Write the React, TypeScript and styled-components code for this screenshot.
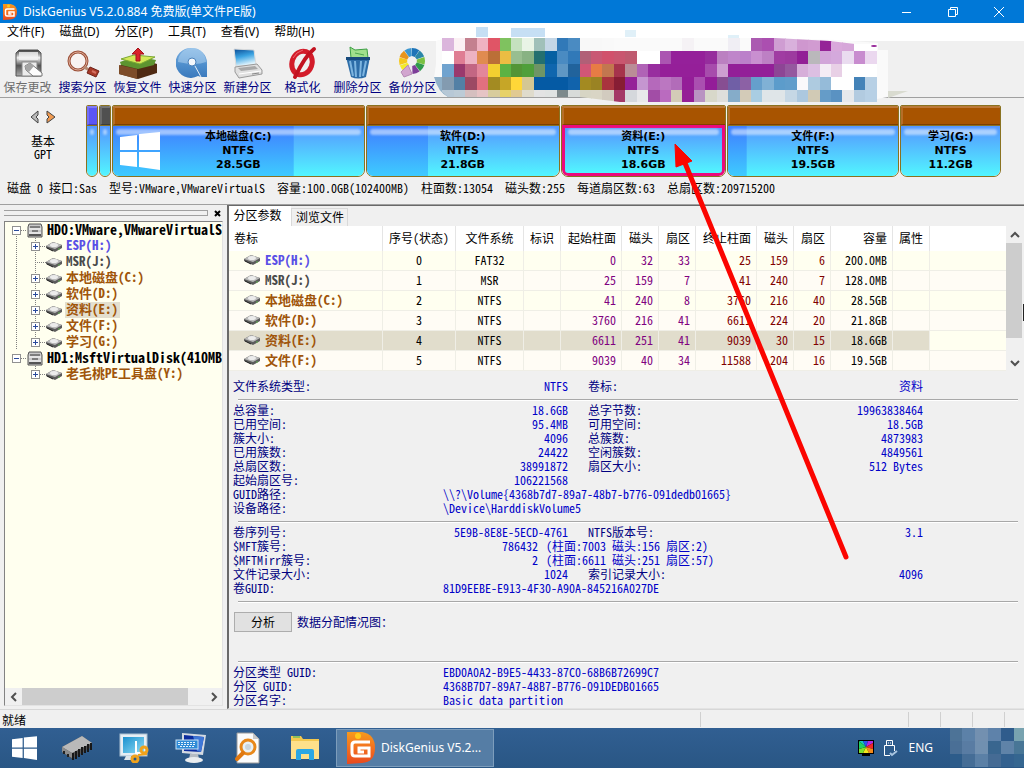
import React from "react";
import styled, { createGlobalStyle, css } from "styled-components";

const Global = createGlobalStyle`
  * { box-sizing: border-box; }
  body { margin: 0; background: #f0f0f0; }
  button { font: inherit; color: inherit; margin: 0; padding: 0; border: 0; background: none; }
  ul { list-style: none; margin: 0; padding: 0; }
  svg { flex: none; }
`;

const uiFont = css`
  font-family: "Noto Sans", "Noto Sans CJK SC", sans-serif;
  font-size: 12px;
`;

/* Half-width latin glyphs keep the two-to-one grid of the dialog text. */
const gridFont = css`
  font-family: "Noto Sans CJK SC", sans-serif;
  font-feature-settings: "hwid";
  font-size: 12px;
  line-height: 14px;
`;

const Page = styled.div`
  ${gridFont}
  position: relative;
  display: flex;
  flex-direction: column;
  min-height: 100vh;
  overflow: hidden;
  color: #000;
`;

const TitleBar = styled.header`
  ${uiFont}
  font-feature-settings: normal;
  display: flex;
  align-items: center;
  height: 23px;
  padding: 0 2px;
  background: #0078d7;
  color: #fff;
`;
const Title = styled.h1`
  flex: 1;
  margin: 0 0 0 5px;
  font-size: 12px;
  font-weight: 400;
  line-height: 20px;
`;
const WindowButton = styled.button`
  width: 46px;
  height: 22px;
  display: grid;
  place-items: center;
`;

const MenuBar = styled.nav`
  ${uiFont}
  font-feature-settings: normal;
  display: flex;
  gap: 15px;
  height: 18px;
  padding-left: 7px;
  background: #fff;
  line-height: 18px;
`;

const Toolbar = styled.div`
  display: flex;
  height: 57px;
  border-bottom: 1px solid #a0a0a0;
`;
const Tool = styled.button<{ $disabled?: boolean }>`
  display: flex;
  flex-direction: column;
  align-items: center;
  width: 55px;
  padding-top: 5px;
  color: ${(p) => (p.$disabled ? "#6d6d6d" : "#000080")};
  white-space: nowrap;
`;

const DiskBar = styled.section`
  display: flex;
  padding: 7px 23px 0 0;
`;
const DiskNav = styled.div`
  width: 86px;
  display: flex;
  flex-direction: column;
  align-items: center;
  text-align: center;
  padding-top: 5px;
  gap: 9px;
  line-height: 13px;
`;
const NavArrows = styled.div`
  display: flex;
  gap: 6px;
`;
const Partitions = styled.div`
  flex: 1;
  display: flex;
  gap: 1px;
  height: 72px;
`;
const Partition = styled.button<{ $grow?: number; $head: string }>`
  flex: ${(p) => (p.$grow ? `${p.$grow} 1 0` : "0 0 12px")};
  min-width: 0;
  display: flex;
  flex-direction: column;
  border: 1px solid #8a7220;
  border-radius: 2px 2px 7px 7px;
  overflow: hidden;
  &::before {
    content: "";
    width: 100%;
    height: 16px;
    flex: none;
    background: ${(p) => p.$head};
    border: 2px solid;
    border-color: #ffffff38 #00000030 #00000040 #ffffff28;
    border-bottom-width: 1px;
  }
`;
const PartitionBody = styled.span<{ $used: number; $active?: boolean }>`
  position: relative;
  flex: 1;
  width: 100%;
  border: ${(p) => (p.$active ? "3px solid #ec0a7c" : "0")};
  border-top: ${(p) => (p.$active ? "3px solid #ec0a7c" : "1px solid #8a7220")};
  border-radius: 0 0 6px 6px;
  background:
    linear-gradient(#407eff, #3ecbff) 0 0 / ${(p) => p.$used}% 100% no-repeat,
    linear-gradient(#5596ff, #52f6ff);
  display: flex;
  align-items: flex-start;
  justify-content: center;
  padding-top: ${(p) => (p.$active ? "2px" : "4px")};
  &::before {
    content: "";
    position: absolute;
    left: 3px;
    right: 3px;
    top: ${(p) => (p.$active ? "1px" : "3px")};
    height: 6px;
    border-radius: 4px;
    background: #ffffff80;
    filter: blur(1px);
  }
`;
const PartitionText = styled.span`
  position: relative;
  font-family: "DejaVu Sans", "Noto Sans CJK SC", sans-serif;
  font-feature-settings: normal;
  font-size: 11px;
  font-weight: 700;
  line-height: 14px;
  text-align: center;
  & > span { display: block; height: 14px; }
`;
const SystemLogo = styled.svg`
  position: absolute;
  left: 7px;
  top: 6px;
`;
const DiskInfo = styled.p`
  margin: 0;
  padding: 4px 7px 9px;
  white-space: pre;
`;

const Main = styled.main`
  flex: 1;
  display: flex;
  border-top: 1px solid #a0a0a0;
`;
const Side = styled.aside`
  width: 227px;
  display: flex;
  flex-direction: column;
  padding: 0 4px 3px;
`;
const Grip = styled.div`
  height: 16px;
  display: flex;
  align-items: center;
  gap: 4px;
`;
const GripBar = styled.span`
  flex: 1;
  height: 6px;
  border: solid #a0a0a0;
  border-width: 1px 0;
  border-right: 1px solid #a0a0a0;
`;
const CloseButton = styled.button`
  width: 11px;
  height: 13px;
  display: grid;
  place-items: center;
`;
const TreeBox = styled.div`
  flex: 1;
  display: flex;
  flex-direction: column;
  background: #ffffef;
  border: 1px solid #828282;
  border-right-color: #e3e3e3;
  border-bottom-color: #e3e3e3;
  overflow: hidden;
`;
const dots = "repeating-linear-gradient(#808080 0 1px, transparent 1px 2px)";
const Tree = styled.ul`
  flex: 1;
  overflow: hidden;
  & > li > ul { background: ${dots} 30px 0 / 1px calc(100% - 8px) no-repeat; }
  & > li:first-child { background: ${dots} 11px 8px / 1px 100% no-repeat; }
`;
const TreeRow = styled.div<{ $child?: boolean }>`
  display: flex;
  align-items: center;
  height: 16px;
  padding-left: ${(p) => (p.$child ? "26px" : "7px")};
`;
const Expander = styled.button`
  flex: none;
  width: 9px;
  height: 9px;
  border: 1px solid #919191;
  background: #fff;
  display: grid;
  place-items: center;
`;
const Dash = styled.span<{ $wide?: boolean }>`
  flex: none;
  width: ${(p) => (p.$wide ? "11px" : "6px")};
  margin-left: ${(p) => (p.$wide ? "4px" : "0")};
  height: 1px;
  background: repeating-linear-gradient(90deg, #808080 0 1px, transparent 1px 2px);
`;
const TreeLabel = styled.span<{ $color: string; $disk?: boolean; $active?: boolean }>`
  color: ${(p) => p.$color};
  font-size: ${(p) => (p.$disk ? "14px" : "13px")};
  font-weight: 700;
  line-height: 14px;
  white-space: nowrap;
  margin-left: 3px;
  padding: 0 2px 2px 1px;
  background: ${(p) => (p.$active ? "#e3dfcf" : "transparent")};
`;
const HScroll = styled.div`
  height: 17px;
  display: flex;
  background: #f0f0f0;
`;
const VScroll = styled.div`
  width: 16px;
  display: flex;
  flex-direction: column;
  background: #f0f0f0;
`;
const ScrollButton = styled.button`
  flex: none;
  width: 17px;
  height: 17px;
  display: grid;
  place-items: center;
`;
const Thumb = styled.span<{ $share: number }>`
  flex: ${(p) => p.$share};
  background: #cdcdcd;
`;
const Track = styled.span<{ $share: number }>`
  flex: ${(p) => p.$share};
`;

const Content = styled.section`
  flex: 1;
  min-width: 0;
  border: solid #696969;
  border-width: 1px 0 0 2px;
  border-bottom: 1px solid #e3e3e3;
`;
const Tabs = styled.div`
  display: flex;
  align-items: flex-end;
  height: 20px;
`;
const Tab = styled.button<{ $active?: boolean }>`
  height: ${(p) => (p.$active ? "20px" : "18px")};
  padding: 0 ${(p) => (p.$active ? "9px 3px 4px" : "4px 1px")};
  width: ${(p) => (p.$active ? "62px" : "57px")};
  background: ${(p) => (p.$active ? "#fff" : "#f0f0f0")};
  border: ${(p) => (p.$active ? "0" : "1px solid #d9d9d9")};
  border-bottom: 0;
  white-space: nowrap;
`;
const GridArea = styled.div`
  display: flex;
  margin-right: 2px;
  background: #fff;
`;
const Grid = styled.table`
  flex: 1;
  border-collapse: separate;
  border-spacing: 0;
  table-layout: fixed;
  min-width: 0;
`;
const HeadCell = styled.th<{ $align?: string }>`
  height: 25px;
  padding: 0 5px 2px;
  border-right: 1px solid #e5e5e5;
  font-weight: 400;
  text-align: ${(p) => p.$align || "center"};
  white-space: nowrap;
`;
const BodyRow = styled.tr<{ $active?: boolean }>`
  background: #fffcf5;
  &:nth-child(odd) { background: #fffff0; }
  ${(p) => p.$active && css`
    && td:not(:last-child) { background: #e1ddcc; }
  `}
`;
const Cell = styled.td<{ $align?: string; $color?: string }>`
  height: 20px;
  padding: 0 5px 2px;
  border: solid #efeee6;
  border-width: 0 1px 1px 0;
  color: ${(p) => p.$color || "#000"};
  text-align: ${(p) => p.$align || "center"};
  white-space: nowrap;
  &:last-child { border-right: 0; }
`;
const VolumeName = styled.span`
  display: flex;
  align-items: center;
  gap: 5px;
  padding-left: 10px;
  font-size: 13px;
  font-weight: 700;
`;

const Details = styled.div`
  padding-top: 8px;
  color: #000080;
`;
const Group = styled.dl`
  margin: 0 6px 0 4px;
`;
const Line = styled.div`
  display: grid;
  grid-template-columns: 210px 125px 20px 120px 215px;
  height: 14px;
  white-space: pre;
  & > dt { grid-row: 1; }
`;
const SecondLabel = styled.dt`
  grid-column: 4;
`;
const Value = styled.dd<{ $mode: "first" | "second" | "wide" | "lead" | "tail" }>`
  margin: 0;
  color: #0000c8;
  grid-row: 1;
  ${(p) => p.$mode === "first" && css`grid-column: 2; text-align: right;`}
  ${(p) => p.$mode === "second" && css`grid-column: 5; text-align: right;`}
  ${(p) => p.$mode === "wide" && css`grid-column: 2 / 6;`}
  ${(p) => p.$mode === "lead" && css`grid-column: 2; text-align: right; padding-right: 30px;`}
  ${(p) => p.$mode === "tail" && css`grid-column: 2 / 6; padding-left: 103px;`}
`;
const Rule = styled.hr`
  margin: 6px 6px 2px 9px;
  border: 0;
  height: 2px;
  background: linear-gradient(#a8a8a8 50%, #fff 50%);
`;
const Analysis = styled.div`
  display: flex;
  align-items: center;
  gap: 5px;
  padding: 7px 0 23px 5px;
`;
const AnalyzeButton = styled.button`
  width: 58px;
  height: 20px;
  border: 1px solid #adadad;
  background: #e1e1e1;
  color: #000;
`;

const StatusBar = styled.footer`
  display: flex;
  height: 19px;
  border-top: 1px solid #d7d7d7;
`;
const StatusPane = styled.span<{ $width?: number }>`
  flex: ${(p) => (p.$width ? `0 0 ${p.$width}px` : "1")};
  margin-top: 2px;
  margin-bottom: 1px;
  padding-left: 2px;
  line-height: 16px;
  border-right: 1px solid #d0d0d0;
  &:last-child { border-right: 0; }
`;

const Taskbar = styled.nav`
  ${uiFont}
  font-feature-settings: normal;
  display: flex;
  height: 40px;
  background: linear-gradient(#315f92, #295684);
  color: #fff;
`;
const TaskButton = styled.button`
  width: 57px;
  display: grid;
  place-items: center;
  &:first-child { width: 48px; }
`;
const TaskWindow = styled.button`
  width: 158px;
  margin: 1px 0 1px 3px;
  padding-left: 8px;
  display: flex;
  align-items: center;
  gap: 4px;
  border: 1px solid #7d9dbc;
  background: #557da5;
  white-space: nowrap;
`;
const Tray = styled.div`
  margin-left: auto;
  display: flex;
  align-items: center;
  gap: 10px;
`;
const Language = styled.button`
  margin-right: 7px;
`;

const Overlay = styled.svg`
  position: absolute;
  pointer-events: none;
`;
const PromoMosaic = styled(Overlay)`
  left: 433px;
  top: 26px;
`;
const Pointer = styled(Overlay)`
  left: 668px;
  top: 140px;
`;

/* ---------- icons ---------- */

const GeniusLogo = ({ size }: { size: number }) => (
  <svg width={size} height={size} viewBox="0 0 30 32">
    <defs>
      <linearGradient id={`dg${size}`} x2="0" y2="1">
        <stop offset="0" stopColor="#f79a1c" />
        <stop offset="0.5" stopColor="#f2701f" />
        <stop offset="1" stopColor="#e8491f" />
      </linearGradient>
    </defs>
    <path d="M1 0H16Q29 2 29 16T16 31L1 32Z" fill={`url(#dg${size})`} />
    <circle cx="12" cy="4" r="3" fill="#ffc91c" />
    <path d="M24 10H9Q6 10 6 13V21Q6 24 9 24H23V16H13V20H18" fill="none" stroke="#fff" strokeWidth="3" />
  </svg>
);

const WinShape = () => (
  <path d="M0 5 17 3V18H0ZM19 2 40 0V18H19ZM0 20H17V35L0 33ZM19 20H40V38L19 35Z" fill="#fff" />
);
const WinLogo = () => (
  <svg width="25" height="24" viewBox="0 0 40 38"><WinShape /></svg>
);

const SaveIcon = () => (
  <svg width="34" height="34" viewBox="0 0 34 34">
    <defs><linearGradient id="sv" x2="0" y2="1"><stop offset="0" stopColor="#333" /><stop offset=".3" stopColor="#f4f4f4" /><stop offset=".6" stopColor="#555" /><stop offset="1" stopColor="#aaa" /></linearGradient></defs>
    <path d="M8 4H27L30 7V30H5V7Z" fill="url(#sv)" stroke="#555" />
    <path d="M8 6H27V14H8Z" fill="#f3f3f3" opacity=".8" />
    <rect x="11" y="16" width="15" height="14" fill="#ececec" stroke="#888" />
    <path d="M14 20 19 17 31 27V30H22L15 24Z" fill="#fdfdfd" stroke="#777" />
    <path d="M14 20 19 17 23 20 18 26 15 24Z" fill="#a5a5a5" />
  </svg>
);
const SearchIcon = () => (
  <svg width="34" height="34" viewBox="0 0 34 34">
    <circle cx="12" cy="15" r="9" fill="#f8f3f1" stroke="#9c5038" strokeWidth="3" />
    <circle cx="12" cy="15" r="9" fill="none" stroke="#dfb09c" strokeWidth="1" />
    <path d="M18 21 25 25" stroke="#b58a72" strokeWidth="3" />
    <path d="M24 21 33 25 30 31 21 27Z" fill="#a83a28" stroke="#6e2117" />
    <path d="M26 25 30 27" stroke="#d57060" strokeWidth="2" />
  </svg>
);
const RestoreIcon = () => (
  <svg width="40" height="34" viewBox="0 0 40 34">
    <path d="M1 20 20 12 39 18V27L20 33 1 28Z" fill="#4f2a12" />
    <path d="M1 19 19 23V33L1 28Z" fill="#7d4c28" />
    <path d="M2 16 18 10 38 14 36 19 20 23 3 19Z" fill="#5d9430" />
    <path d="M3 13 16 9 37 11 22 18Z" fill="#d3e858" stroke="#7ba832" />
    <path d="M18 15V8H14L20 2 26 8H22V15Z" fill="#d9222a" stroke="#a3131a" />
  </svg>
);
const QuickIcon = () => (
  <svg width="34" height="34" viewBox="0 0 34 34">
    <defs><linearGradient id="qk" x2="0" y2="1"><stop offset="0" stopColor="#7db1e2" /><stop offset=".55" stopColor="#4f8fcd" /><stop offset="1" stopColor="#3a79bc" /></linearGradient></defs>
    <path d="M16 2A15 15 0 0 1 31 17V31H25L22 30A15 15 0 1 1 16 2Z" fill="url(#qk)" />
    <path d="M2 16A14 14 0 0 1 30 16Q20 20 2 16Z" fill="#b9daf3" opacity=".5" />
    <circle cx="16" cy="16" r="4" fill="#f4f8fc" stroke="#4a82bb" />
    <path d="M19 20 25 31" stroke="#e6eff8" strokeWidth="1" />
  </svg>
);
const NewIcon = () => (
  <svg width="34" height="34" viewBox="0 0 34 34">
    <defs><linearGradient id="nw" x2=".3" y2="1"><stop offset="0" stopColor="#0b4a92" /><stop offset=".5" stopColor="#3aa3e2" /><stop offset="1" stopColor="#dff3fc" /></linearGradient></defs>
    <path d="M3 3 23 4 25 19 5 20Z" fill="url(#nw)" stroke="#dcdcdc" />
    <path d="M4 21 26 18 31 24V28L8 32 4 26Z" fill="#e0e0e0" stroke="#999" />
    <path d="M7 22 24 20 27 23 10 25Z" fill="#a8a8a8" />
    <path d="M8 28 30 25" stroke="#fff" />
    <path d="M21 28 28 27" stroke="#888" />
  </svg>
);
const FormatIcon = () => (
  <svg width="34" height="34" viewBox="0 0 34 34">
    <ellipse cx="16" cy="17" rx="10" ry="12" transform="rotate(20 16 17)" fill="none" stroke="#d31c2a" strokeWidth="5" />
    <path d="M28 3Q19 10 9 31" fill="none" stroke="#c21220" strokeWidth="4" strokeLinecap="round" />
    <path d="M7 12Q10 6 17 4" fill="none" stroke="#ee6670" strokeWidth="1" />
  </svg>
);
const DeleteIcon = () => (
  <svg width="34" height="34" viewBox="0 0 34 34">
    <path d="M9 1 14 4 26 3 27 12H10Z" fill="#a0e08c" stroke="#3d9f45" />
    <path d="M14 7 23 9" stroke="#4ca850" />
    <path d="M5 11H29L25 31Q17 34 10 31Z" fill="#2d6da8" />
    <path d="M5 11H29V14H5Z" fill="#174a7c" />
    <path d="M9 15 12 30M14 15 15 31M20 15 19 31M25 15 22 30" stroke="#7db5e0" strokeWidth="2" />
  </svg>
);
const wheel = ["#1d74b8", "#2a86a8", "#7ac142", "#2f9a4c", "#7d3d98", "#efe6f0", "#f4ea2c", "#f5c81c", "#e8951c", "#3e97cf"];
const wheelPoint = (r: number, t: number) => `${(16 + r * Math.cos(t)).toFixed(1)} ${(15 + r * Math.sin(t)).toFixed(1)}`;
const BackupIcon = () => (
  <svg width="34" height="34" viewBox="0 0 34 34">
    {wheel.map((c, i) => {
      const a = ((i * 36 - 90) * Math.PI) / 180;
      const b = ((i * 36 - 56) * Math.PI) / 180;
      return <path key={c} d={`M${wheelPoint(5, a)}L${wheelPoint(13, a)}A13 13 0 0 1 ${wheelPoint(13, b)}L${wheelPoint(5, b)}Z`} fill={c} />;
    })}
    <path d="M12 19 16 28 8 31 5 26Z" fill="#d2a5cf" stroke="#b58ab5" />
  </svg>
);

const DriveIcon = () => (
  <svg width="16" height="11" viewBox="0 0 16 11">
    <path d="M0 5 7 1 16 4V7L9 11 0 7Z" fill="#5c5c5c" />
    <path d="M0 5 7 1 16 4 9 8Z" fill="#b9b9b9" />
    <ellipse cx="8" cy="4" rx="4" ry="2" fill="#ececec" />
    <path d="M1 7 7 10" stroke="#222" />
    <path d="M12 8H14" stroke="#5fae4d" />
  </svg>
);
const HardDiskIcon = () => (
  <svg width="16" height="15" viewBox="0 0 16 15">
    <path d="M2 1H14L15 4V14H1V4Z" fill="#c9c9c9" stroke="#555" />
    <path d="M2 6H14M2 10H14" stroke="#fff" />
    <path d="M3 4H13M5 8H11" stroke="#333" />
    <path d="M2 12H14" stroke="#555" strokeWidth="2" />
  </svg>
);
const Chevron = ({ d }: { d: string }) => (
  <svg width="10" height="10" viewBox="0 0 10 10"><path d={d} fill="none" stroke="#505050" strokeWidth="2" /></svg>
);
const NavArrow = ({ d, fill }: { d: string; fill: string }) => (
  <svg width="10" height="14" viewBox="0 0 10 14"><path d={d} fill={fill} stroke="#444" /></svg>
);

const ChipIcon = () => (
  <svg width="32" height="26" viewBox="0 0 32 26">
    <path d="M1 12 21 1 31 8V12L11 24 1 17Z" fill="#555" />
    <path d="M1 12 21 1 31 8 11 18Z" fill="#b9b9b9" />
    <path d="M1 12 11 18V23L1 17Z" fill="#8c8c8c" />
    <path d="M12 18V25M15 16V24M18 14V22M21 12V20M24 11V18M27 9V17M30 8V15" stroke="#181818" strokeWidth="2" />
    <path d="M3 16V19M7 19V22" stroke="#222" strokeWidth="2" />
  </svg>
);
const SnipIcon = () => (
  <svg width="30" height="30" viewBox="0 0 30 30">
    <defs><linearGradient id="sn" x2="1" y2="1"><stop offset="0" stopColor="#1a90cf" /><stop offset="1" stopColor="#8fdcf4" /></linearGradient></defs>
    <rect x="1" y="1" width="27" height="22" fill="#e6eef5" stroke="#a9c0d2" />
    <rect x="4" y="4" width="21" height="16" fill="url(#sn)" />
    <path d="M7 23H12V27H5Z" fill="#dfe6ec" />
    <path d="M17 8V21M16 20H25" fill="none" stroke="#fff" strokeWidth="2" />
    <ellipse cx="16" cy="26" rx="3" ry="3" fill="none" stroke="#f0a21c" strokeWidth="3" />
    <ellipse cx="25" cy="17" rx="3" ry="3" fill="none" stroke="#f0a21c" strokeWidth="3" />
    <path d="M19 22 28 21" stroke="#f0a21c" strokeWidth="2" />
  </svg>
);
const KeyboardIcon = () => (
  <svg width="32" height="32" viewBox="0 0 32 32">
    <path d="M7 1 31 3 28 23 7 21Z" fill="#d4dae2" />
    <path d="M9 3 29 5 26 20 9 19Z" fill="#0c2c9e" />
    <path d="M18 4 29 5 26 20 22 19Z" fill="#3f78d8" />
    <path d="M15 22H23L24 27H14Z" fill="#b5bcc4" />
    <ellipse cx="19" cy="28" rx="9" ry="3" fill="#e9ecef" />
    <rect x="1" y="8" width="22" height="9" fill="#2f8bd6" stroke="#c8e2f6" />
    <path d="M3 10.500H21M3 12.500H21M5 14.500H19" stroke="#e5f3fc" strokeDasharray="2 1" />
  </svg>
);
const DocSearchIcon = () => (
  <svg width="28" height="32" viewBox="0 0 28 32">
    <path d="M3 1H19L25 7V31H3Z" fill="#fbfbfb" stroke="#999" />
    <path d="M19 1V7H25Z" fill="#c8c8c8" />
    <circle cx="14" cy="15" r="7" fill="#e8f0f5" stroke="#e8881a" strokeWidth="3" />
    <circle cx="14" cy="15" r="3" fill="#c9d5de" />
    <path d="M9 21 3 27" stroke="#e07810" strokeWidth="4" strokeLinecap="round" />
  </svg>
);
const FolderIcon = () => (
  <svg width="28" height="26" viewBox="0 0 28 26">
    <path d="M0 1H10L12 4H28V24H0Z" fill="#f3c84e" />
    <path d="M2 2H9" stroke="#8fbf5a" strokeWidth="2" />
    <path d="M0 6H28V24H0Z" fill="#fde08a" />
    <path d="M5 25V16Q5 14 7 14H21Q23 14 23 16V25H18V19H10V25Z" fill="#2aa7e4" />
  </svg>
);
const ColorIcon = () => (
  <svg width="16" height="16" viewBox="0 0 16 16">
    <path d="M0 0H16V14H12V16H4V14H0Z" fill="#000" />
    <path d="M8 7 1 1H5Z" fill="#19c8c0" /><path d="M8 7 5 1H10Z" fill="#2a55f0" />
    <path d="M8 7 10 1H15V3Z" fill="#b02ae0" /><path d="M8 7 15 3V9Z" fill="#f02828" />
    <path d="M8 7 15 9V13H11Z" fill="#f58a1a" /><path d="M8 7 11 13H5Z" fill="#f4e41c" />
    <path d="M8 7 5 13H1V9Z" fill="#7ee02c" /><path d="M8 7 1 9V1Z" fill="#1fd060" />
  </svg>
);
const UsbIcon = () => (
  <svg width="14" height="17" viewBox="0 0 14 17" fill="none" stroke="#fff">
    <path d="M2.500 5V.5H8.500V5M.5 5.500H10.500V11M6 15.500H.5V5.500" />
    <path d="M4 3H5M6 3H7" />
    <path d="M6 13 8 15 13 11" stroke="#a8c4e0" strokeWidth="2" />
  </svg>
);

/* ---------- data ---------- */

const tools: [string, React.ReactNode, boolean?][] = [
  ["保存更改", <SaveIcon />, true],
  ["搜索分区", <SearchIcon />],
  ["恢复文件", <RestoreIcon />],
  ["快速分区", <QuickIcon />],
  ["新建分区", <NewIcon />],
  ["格式化", <FormatIcon />],
  ["删除分区", <DeleteIcon />],
  ["备份分区", <BackupIcon />],
];

const BROWN = "#a85400";
const parts = [
  { name: "本地磁盘(C:)", size: "28.5GB", grow: 254, used: 72, logo: true },
  { name: "软件(D:)", size: "21.8GB", grow: 195, used: 32 },
  { name: "资料(E:)", size: "18.6GB", grow: 165, used: 0, active: true },
  { name: "文件(F:)", size: "19.5GB", grow: 173, used: 11 },
  { name: "学习(G:)", size: "11.2GB", grow: 100, used: 0 },
];

const VIOLET = "#5a50e6";
const GREY = "#4a4a4a";
const ORANGE = "#a0550a";
const tree = [
  {
    name: "HD0:VMware,VMwareVirtualS",
    items: [
      ["ESP(H:)", VIOLET], ["MSR(J:)", GREY], ["本地磁盘(C:)", ORANGE], ["软件(D:)", ORANGE],
      ["资料(E:)", ORANGE], ["文件(F:)", ORANGE], ["学习(G:)", ORANGE],
    ],
  },
  { name: "HD1:MsftVirtualDisk(410MB", items: [["老毛桃PE工具盘(Y:)", ORANGE]] },
];

const columns: [string, number, string?][] = [
  ["卷标", 154, "left"], ["序号(状态)", 73], ["文件系统", 68], ["标识", 37], ["起始柱面", 61, "right"],
  ["磁头", 37, "right"], ["扇区", 37, "right"], ["终止柱面", 61, "right"], ["磁头", 37, "right"],
  ["扇区", 37, "right"], ["容量", 62, "right"], ["属性", 37],
];
const rows: [string, string, string[]][] = [
  ["ESP(H:)", VIOLET, ["0", "FAT32", "", "0", "32", "33", "25", "159", "6", "200.0MB", ""]],
  ["MSR(J:)", GREY, ["1", "MSR", "", "25", "159", "7", "41", "240", "7", "128.0MB", ""]],
  ["本地磁盘(C:)", ORANGE, ["2", "NTFS", "", "41", "240", "8", "3760", "216", "40", "28.5GB", ""]],
  ["软件(D:)", ORANGE, ["3", "NTFS", "", "3760", "216", "41", "6611", "224", "20", "21.8GB", ""]],
  ["资料(E:)", ORANGE, ["4", "NTFS", "", "6611", "251", "41", "9039", "30", "15", "18.6GB", ""]],
  ["文件(F:)", ORANGE, ["5", "NTFS", "", "9039", "40", "34", "11588", "204", "16", "19.5GB", ""]],
];
const cellColor = (i: number) => (i >= 3 && i <= 5 ? "#800080" : i >= 6 && i <= 8 ? "#800000" : "#000");

type Field = { a: string; v?: string; b?: string; w?: string; wide?: string; lead?: string; tail?: string };
const head: Field[] = [{ a: "文件系统类型:", v: "NTFS", b: "卷标:", w: "资料" }];
const capacity: Field[] = [
  { a: "总容量:", v: "18.6GB", b: "总字节数:", w: "19963838464" },
  { a: "已用空间:", v: "95.4MB", b: "可用空间:", w: "18.5GB" },
  { a: "簇大小:", v: "4096", b: "总簇数:", w: "4873983" },
  { a: "已用簇数:", v: "24422", b: "空闲簇数:", w: "4849561" },
  { a: "总扇区数:", v: "38991872", b: "扇区大小:", w: "512 Bytes" },
  { a: "起始扇区号:", v: "106221568" },
  { a: "GUID路径:", wide: "\\\\?\\Volume{4368b7d7-89a7-48b7-b776-091dedb01665}" },
  { a: "设备路径:", wide: "\\Device\\HarddiskVolume5" },
];
const volume: Field[] = [
  { a: "卷序列号:", v: "5E9B-8E8E-5ECD-4761", b: "NTFS版本号:", w: "3.1" },
  { a: "$MFT簇号:", lead: "786432", tail: "(柱面:7003 磁头:156 扇区:2)" },
  { a: "$MFTMirr簇号:", lead: "2", tail: "(柱面:6611 磁头:251 扇区:57)" },
  { a: "文件记录大小:", v: "1024", b: "索引记录大小:", w: "4096" },
  { a: "卷GUID:", wide: "81D9EEBE-E913-4F30-A90A-845216A027DE" },
];
const guid: Field[] = [
  { a: "分区类型 GUID:", wide: "EBD0A0A2-B9E5-4433-87C0-68B6B72699C7" },
  { a: "分区 GUID:", wide: "4368B7D7-89A7-48B7-B776-091DEDB01665" },
  { a: "分区名字:", wide: "Basic data partition" },
];

const mosaic = [
  "dbb5dc fbf0f3 c4808f efb2c2 e05566 7fc25f c5e1bf e9f4e6 a0c0b9 c4d6e6 3179b8 4a8bc2 f8f8f8 f8f8f8 f9f9f9 fafafa fafafa fafafa fafafa fafafa fafafa f5f2f5 fafafa fafafa fafafa f0eef4 fafafa ab5bb1 ab4fb0 cf9dd2 d9b0dc cf97cf d19bd1 952497 d9a8db d6a6d9 ffffff ffffff",
  "ffffff df7d93 edb2c2 e08b50 bb6f37 ebbd43 98be90 88b283 24706f 0660a2 4a8bc2 3179b8 b16077 c95874 d1516c c9566f bf5a6f ffffff ffffff ab55b1 95209a 95209a 95209a 962d9d bb80c1 bf85ca bb80ca c98fd0 bd80c4 a03ca2 9d3a9f 921f96 bab8bb d2a5d9 d4a9dc eadcf0 c88ccf ebd8ef",
  "70a3cf 9a396d c36683 e3869a f3cf30 5bb243 539536 4f9f3b 6f9566 0f66ae 5f97c4 21639c d15676 e77c45 c2774f a6334c ba8d97 b063b6 982e9f 951f99 951f99 951f99 951f99 a74cac cd9fd1 931f98 931f98 931f98 931f98 8d4595 95589f d6aed9 dcbfe2 f4ecf5 e8d0e6 ffffff ffffff ffffff",
  "839bb0 5380a5 9c4964 e27080 a38b22 c6a627 ffd738 d4c793 055aa4 055aa4 055aa4 1163ac a38a21 9a8323 a9333e 871d34 952198 c596d0 b569bb bb77c1 b26cb9 941d98 aa4fb0 931d98 874e92 705fa6 8c61a5 659fcc 80b1d5 5c9ccb 609dcb f9f9fb aecbe0 95bbd9 ffffff ffffff 4483b8 b7d0e5",
  "b7c8d6 bccbd6 d5bfbf e6c4c5 d8cc9d e7d268 e1ca92 dfdbcc e3e3e3 e0e3e2 7d898b d8dbd9 d7d5c4 d9d5c5 d2cbbf a43866 d5d8dc e8e8ea a24da6 ba6bbf d3cbb7 951f96 b993c2 d8d8ca dededb 85acc9 d3cbb8 a9cde2 dfe5e8 dfe5e8 c5d7e5 acc8df d1cab5 659cc8 5a92c2 e6e9ec b2cbe0 b7d0e5",
].map((r) => r.split(" "));

const trayMosaic = [
  "4d7397 5c81a8 7390b0 5e82aa 2f5c8c 78a3b0",
  "4a6f96 597ca3 7190b0 39668f 5f83a8 487696",
  "2d5c8a 456d96 5b80a6 456b94 33618f 356690",
].map((r) => r.split(" "));

/* ---------- parts ---------- */

const Fields = ({ items }: { items: Field[] }) => (
  <Group>
    {items.map((f) => (
      <Line key={f.a}>
        <dt>{f.a}</dt>
        {f.v && <Value $mode="first">{f.v}</Value>}
        {f.wide && <Value $mode="wide">{f.wide}</Value>}
        {f.lead && <Value $mode="lead">{f.lead}</Value>}
        {f.tail && <Value $mode="tail">{f.tail}</Value>}
        {f.b && <SecondLabel>{f.b}</SecondLabel>}
        {f.w && <Value $mode="second">{f.w}</Value>}
      </Line>
    ))}
  </Group>
);

export default function App() {
  return (
    <Page>
      <Global />
      <TitleBar>
        <GeniusLogo size={16} />
        <Title>DiskGenius V5.2.0.884 免费版(单文件PE版)</Title>
        <WindowButton aria-label="最小化">
          <svg width="10" height="10"><path d="M0 5.500H9" stroke="#fff" /></svg>
        </WindowButton>
        <WindowButton aria-label="还原">
          <svg width="10" height="10" fill="none" stroke="#fff"><path d="M.5 2.500H7.500V9.500H.5ZM2.500 2.500V.5H9.500V7.500H7.500" /></svg>
        </WindowButton>
        <WindowButton aria-label="关闭">
          <svg width="10" height="10"><path d="M0 0 10 10M10 0 0 10" stroke="#fff" /></svg>
        </WindowButton>
      </TitleBar>

      <MenuBar>
        {["文件(F)", "磁盘(D)", "分区(P)", "工具(T)", "查看(V)", "帮助(H)"].map((m) => (
          <button key={m}>{m}</button>
        ))}
      </MenuBar>

      <Toolbar>
        {tools.map(([label, icon, disabled]) => (
          <Tool key={label} $disabled={disabled}>{icon}{label}</Tool>
        ))}
      </Toolbar>

      <DiskBar>
        <DiskNav>
          <NavArrows>
            <button aria-label="上一个磁盘"><NavArrow d="M8 1 1 7 8 13V9L6 7 8 5Z" fill="#b9b9b9" /></button>
            <button aria-label="下一个磁盘"><NavArrow d="M1 1 9 7 1 13V9L3 7 1 5Z" fill="#f09a50" /></button>
          </NavArrows>
          <div>基本<br />GPT</div>
        </DiskNav>
        <Partitions>
          <Partition $head="#5b55f5" aria-label="ESP(H:)"><PartitionBody $used={0} /></Partition>
          <Partition $head="#505050" aria-label="MSR(J:)"><PartitionBody $used={0} /></Partition>
          {parts.map((p) => (
            <Partition key={p.name} $grow={p.grow} $head={BROWN}>
              <PartitionBody $used={p.used} $active={p.active}>
                {p.logo && <SystemLogo width="40" height="38" viewBox="0 0 40 38"><WinShape /></SystemLogo>}
                <PartitionText>
                  <span>{p.name}</span>
                  <span>NTFS</span>
                  <span>{p.size}</span>
                </PartitionText>
              </PartitionBody>
            </Partition>
          ))}
        </Partitions>
      </DiskBar>
      <DiskInfo>{"磁盘 0 接口:Sas  型号:VMware,VMwareVirtualS  容量:100.0GB(102400MB)  柱面数:13054  磁头数:255  每道扇区数:63  总扇区数:209715200"}</DiskInfo>

      <Main>
        <Side>
          <Grip>
            <GripBar />
            <CloseButton aria-label="关闭面板">
              <svg width="7" height="7"><path d="M1 1 6 6M6 1 1 6" stroke="#000" strokeWidth="2" /></svg>
            </CloseButton>
          </Grip>
          <TreeBox>
            <Tree>
              {tree.map((disk) => (
                <li key={disk.name}>
                  <TreeRow>
                    <Expander aria-label="折叠"><svg width="5" height="5"><path d="M0 2.500H5" stroke="#2a4a9c" /></svg></Expander>
                    <Dash />
                    <HardDiskIcon />
                    <TreeLabel $disk $color="#000">{disk.name}</TreeLabel>
                  </TreeRow>
                  <ul>
                    {disk.items.map(([name, color]) => (
                      <li key={name}>
                        <TreeRow $child>
                          {color !== GREY && (
                            <Expander aria-label="展开"><svg width="5" height="5"><path d="M0 2.500H5M2.500 0V5" stroke="#2a4a9c" /></svg></Expander>
                          )}
                          <Dash $wide={color === GREY} />
                          <DriveIcon />
                          <TreeLabel $color={color} $active={name === "资料(E:)"}>{name}</TreeLabel>
                        </TreeRow>
                      </li>
                    ))}
                  </ul>
                </li>
              ))}
            </Tree>
            <HScroll>
              <ScrollButton aria-label="向左"><Chevron d="M7 1 3 5 7 9" /></ScrollButton>
              <Thumb $share={166} />
              <Track $share={17} />
              <ScrollButton aria-label="向右"><Chevron d="M3 1 7 5 3 9" /></ScrollButton>
            </HScroll>
          </TreeBox>
        </Side>

        <Content>
          <Tabs>
            <Tab $active>分区参数</Tab>
            <Tab>浏览文件</Tab>
          </Tabs>
          <GridArea>
            <Grid>
              <colgroup>
                {columns.map(([, w], i) => <col key={i} width={w} />)}
                <col />
              </colgroup>
              <thead>
                <tr>
                  {columns.map(([c, , align], i) => <HeadCell key={i} $align={align}>{c}</HeadCell>)}
                  <td />
                </tr>
              </thead>
              <tbody>
                {rows.map(([name, color, cells]) => (
                  <BodyRow key={name} $active={name === "资料(E:)"}>
                    <Cell $color={color} $align="left"><VolumeName><DriveIcon />{name}</VolumeName></Cell>
                    {cells.map((c, i) => (
                      <Cell key={i} $color={cellColor(i)} $align={i < 3 ? "center" : "right"}>{c}</Cell>
                    ))}
                    <Cell />
                  </BodyRow>
                ))}
              </tbody>
            </Grid>
            <VScroll>
              <ScrollButton aria-label="向上"><Chevron d="M1 7 5 3 9 7" /></ScrollButton>
              <Thumb $share={95} />
              <Track $share={16} />
              <ScrollButton aria-label="向下"><Chevron d="M1 3 5 7 9 3" /></ScrollButton>
            </VScroll>
          </GridArea>
          <Details>
            <Fields items={head} />
            <Rule />
            <Fields items={capacity} />
            <Rule />
            <Fields items={volume} />
            <Rule />
            <Analysis>
              <AnalyzeButton>分析</AnalyzeButton>
              数据分配情况图：
            </Analysis>
            <Rule />
            <Fields items={guid} />
          </Details>
        </Content>
      </Main>

      <StatusBar>
        <StatusPane>就绪</StatusPane>
        <StatusPane $width={208} />
        <StatusPane $width={32} />
        <StatusPane $width={32} />
        <StatusPane $width={32} />
        <StatusPane $width={19} />
      </StatusBar>

      <Taskbar>
        <TaskButton aria-label="开始"><WinLogo /></TaskButton>
        <TaskButton aria-label="内存"><ChipIcon /></TaskButton>
        <TaskButton aria-label="截图"><SnipIcon /></TaskButton>
        <TaskButton aria-label="屏幕键盘"><KeyboardIcon /></TaskButton>
        <TaskButton aria-label="搜索"><DocSearchIcon /></TaskButton>
        <TaskButton aria-label="文件管理器"><FolderIcon /></TaskButton>
        <TaskWindow><GeniusLogo size={32} />DiskGenius V5.2...</TaskWindow>
        <Tray>
          <ColorIcon />
          <UsbIcon />
          <Language>ENG</Language>
          <svg width="74" height="40" shapeRendering="crispEdges">
            {trayMosaic.map((r, y) => r.map((c, x) => <rect key={`${x}-${y}`} x={x * 13 - 1} y={y * 13} width="13" height="13" fill={`#${c}`} />))}
          </svg>
        </Tray>
      </Taskbar>

      <PromoMosaic width="480" height="78" viewBox="433 26 480 78">
        <path d="M436 41 445 38H770L840 40 878 43V50H888V97Q860 103 800 101L640 100 600 97H450Q436 90 434 78L436 64Z" fill="#fafafa" />
        <path d="M888 91 908 91 888 98Z" fill="#d9dbd0" />
        <path d="M434 77H448V97Q438 92 434 77Z" fill="#8fb0c8" />
        <path d="M476 27H488V37H476ZM511 28H545V37H511Z" fill="#c6dff4" />
        <path d="M625 30H636V37H625ZM728 35H739V41H728Z" fill="#e0f0f8" />
        <clipPath id="blob"><path d="M433 38H775L830 41 855 44 877 44V102H620L580 97H448L433 84Z" /></clipPath>
        <g clipPath="url(#blob)" shapeRendering="crispEdges">
          {mosaic.map((r, y) => r.map((c, x) => (
            <rect key={`${x}-${y}`} x={Math.round(442.4 + x * 11.43)} y={38 + y * 13} width="12" height="13" fill={`#${c}`} />
          )))}
        </g>
        <ellipse cx="874" cy="46" rx="3" ry="1" fill="#952497" />
      </PromoMosaic>

      <Pointer width="356" height="424" viewBox="668 140 356 424">
        <path d="M846 557 685 163" stroke="#fb0500" strokeWidth="5" strokeLinecap="round" />
        <path d="M675 144 692 161 676 167Z" fill="#fb0500" stroke="#fb0500" />
        <path d="M1023 304H1024V321H1023Z" fill="#222" />
      </Pointer>
    </Page>
  );
}
